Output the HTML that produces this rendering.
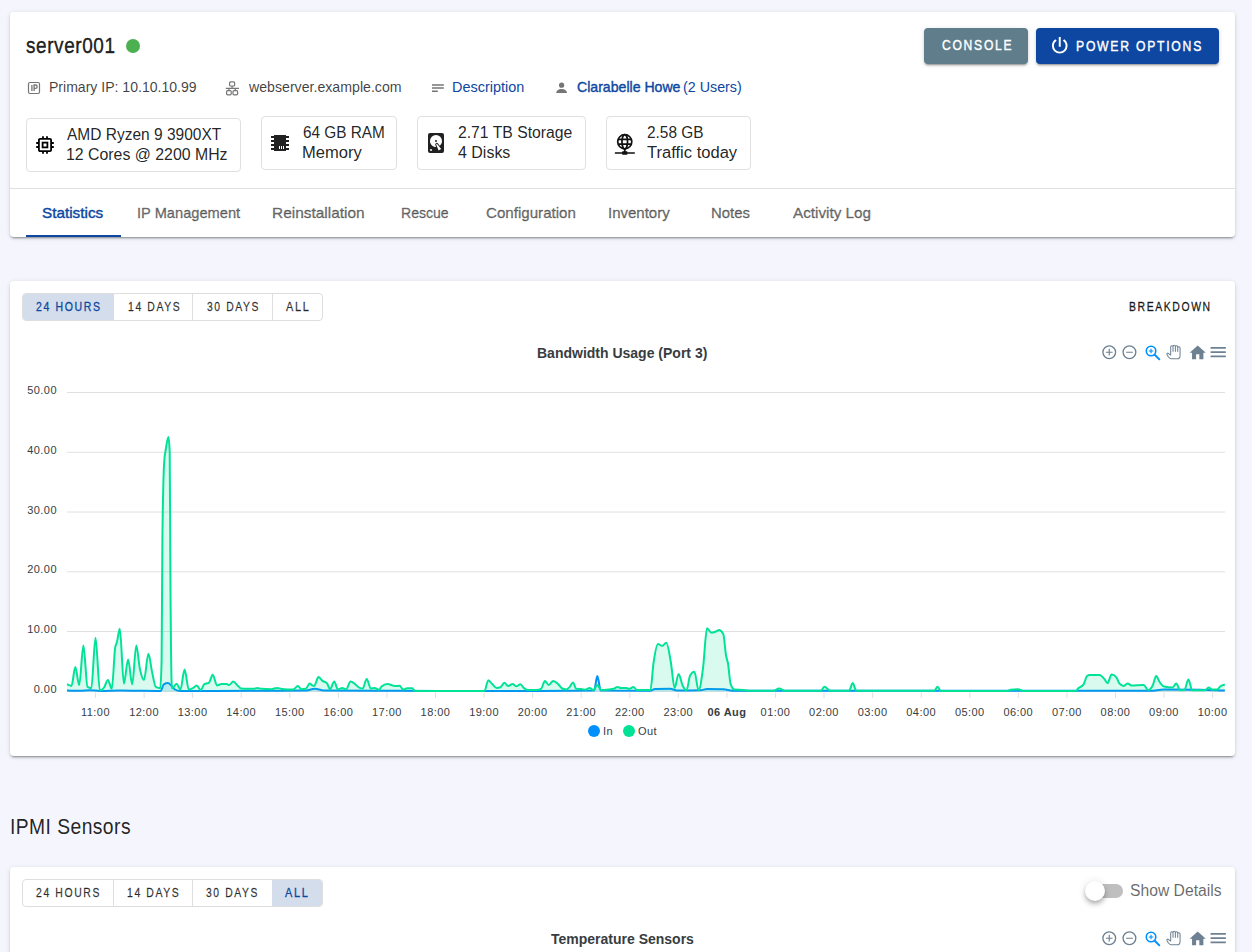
<!DOCTYPE html>
<html><head><meta charset="utf-8">
<style>
html,body{margin:0;padding:0}
body{width:1252px;height:952px;overflow:hidden;background:#f5f6fd;font-family:"Liberation Sans",sans-serif;position:relative;color:rgba(0,0,0,.87)}
.abs{position:absolute;white-space:nowrap}
.card{position:absolute;left:10px;width:1225px;background:#fff;border-radius:4px;box-shadow:0 3px 1px -2px rgba(0,0,0,.2),0 2px 2px 0 rgba(0,0,0,.14),0 1px 5px 0 rgba(0,0,0,.12)}
.t{position:absolute;white-space:nowrap;line-height:1}
.btn{position:absolute;border-radius:4px;color:#fff;font-size:14px;font-weight:normal;-webkit-text-stroke:0.4px currentColor;letter-spacing:2px;box-shadow:0 3px 1px -2px rgba(0,0,0,.2),0 2px 2px 0 rgba(0,0,0,.14),0 1px 5px 0 rgba(0,0,0,.12)}
.spec{position:absolute;border:1px solid #e0e0e0;border-radius:4px;box-sizing:border-box;height:54px}
.spec .t{font-size:16px;color:rgba(0,0,0,.87)}
.tab{position:absolute;font-size:15px;font-weight:normal;-webkit-text-stroke:0.4px currentColor;color:rgba(0,0,0,.54);line-height:1;white-space:nowrap}
.grp{position:absolute;left:12px;top:12px;width:301px;height:28px;border:1px solid #dedede;border-radius:4px;box-sizing:border-box;overflow:hidden}
.grp .b{position:absolute;top:0;height:26px;font-size:13px;font-weight:normal;-webkit-text-stroke:0.3px currentColor;letter-spacing:2px;color:rgba(0,0,0,.75);line-height:1}
.grp .b span{position:absolute;top:6px;white-space:nowrap}
.grp .sep{position:absolute;top:0;width:1px;height:26px;background:#dedede}
.tb svg{position:absolute}
</style></head><body>

<!-- Header card -->
<div class="card" style="top:12px;height:225px">
  <div class="t" id="title" style="left:16.2px;top:23px;font-size:22px;font-weight:normal;-webkit-text-stroke:0.45px currentColor;letter-spacing:0.7px;color:rgba(0,0,0,.87);transform-origin:0 0;transform:scaleX(0.8606)">server001</div>
  <div style="position:absolute;left:116px;top:27px;width:14px;height:14px;border-radius:50%;background:#4caf50"></div>

  <div class="btn" style="left:914px;top:16px;width:104px;height:36px;background:#607d8b"><span class="t" id="console" style="left:17.8px;top:10.2px;transform-origin:0 0;transform:scaleX(0.8648)">CONSOLE</span></div>
  <div class="btn" style="left:1026px;top:16px;width:183px;height:36px;background:#0d47a1">
    <svg style="position:absolute;left:12px;top:6px" width="23.5" height="23.5" viewBox="0 0 24 24"><path fill="#fff" d="M16.56,5.44L15.11,6.89C16.84,7.94 18,9.83 18,12A6,6 0 0,1 12,18A6,6 0 0,1 6,12C6,9.83 7.16,7.94 8.88,6.88L7.44,5.44C5.36,6.88 4,9.28 4,12A8,8 0 0,0 12,20A8,8 0 0,0 20,12C20,9.28 18.64,6.88 16.56,5.44M13,3H11V13H13"/></svg>
    <span class="t" id="power" style="left:39.8px;top:10.7px;transform-origin:0 0;transform:scaleX(0.8713)">POWER OPTIONS</span></div>

  <!-- info row -->
  <svg style="position:absolute;left:17px;top:69px" width="14" height="14" viewBox="0 0 14 14"><rect x="1.5" y="1.5" width="11" height="11" rx="1.5" fill="none" stroke="#757575" stroke-width="1.2"/><path d="M4.9,3.9 V10.1 M7.1,10.1 V4 H8.5 A1.65,1.65 0 0 1 8.5,7.3 H7.1" fill="none" stroke="#757575" stroke-width="1.3"/></svg>
  <div class="t" id="ip" style="left:38.6px;top:66.8px;font-size:15px;color:rgba(0,0,0,.75);transform-origin:0 0;transform:scaleX(0.9366)">Primary IP: 10.10.10.99</div>

  <svg style="position:absolute;left:215px;top:68px" width="16" height="16" viewBox="0 0 16 16"><g fill="none" stroke="#757575" stroke-width="1.2"><rect x="4.6" y="1.8" width="5" height="4.2" rx="1"/><rect x="1.6" y="10.6" width="4.6" height="4.2" rx="1"/><rect x="8" y="10.6" width="4.6" height="4.2" rx="1"/><path d="M7.1,6 V8.4 M0.8,8.4 H14 M3.9,8.4 V10.6 M10.3,8.4 V10.6"/></g></svg>
  <div class="t" id="host" style="left:238.8px;top:66.8px;font-size:15px;color:rgba(0,0,0,.75);transform-origin:0 0;transform:scaleX(0.9432)">webserver.example.com</div>

  <svg style="position:absolute;left:420px;top:68px" width="16" height="16" viewBox="0 0 16 16"><path d="M2,4.9 H13.8 M2,8.1 H13.8 M2,11.3 H7.8" stroke="#757575" stroke-width="1.5" fill="none"/></svg>
  <div class="t" id="desc" style="left:442.2px;top:66.8px;font-size:15px;color:#0d47a1;transform-origin:0 0;transform:scaleX(0.9633)">Description</div>

  <svg style="position:absolute;left:544px;top:68px" width="16" height="16" viewBox="0 0 16 16"><circle cx="7.6" cy="5.2" r="2.6" fill="#757575"/><path d="M2.2,13 C2.4,10.2 5,9 7.6,9 C10.2,9 12.8,10.2 13,13 Z" fill="#757575"/></svg>
  <div class="t" id="user" style="left:566.8px;top:66.8px;font-size:15px;font-weight:normal;-webkit-text-stroke:0.4px currentColor;color:#0d47a1;transform-origin:0 0;transform:scaleX(0.9401)">Clarabelle Howe</div><div class="t" id="user2" style="left:672.8px;top:66.8px;font-size:15px;color:#0d47a1;transform-origin:0 0;transform:scaleX(0.9532)">(2 Users)</div>

  <!-- spec boxes -->
  <div class="spec" style="left:16px;top:106px;width:215px">
    <svg style="position:absolute;left:9px;top:17px" width="18" height="18" viewBox="0 0 18 18"><g fill="none" stroke="#000" stroke-width="1.8"><rect x="2.9" y="2.9" width="12.2" height="12.2" rx="1.2"/><rect x="6.6" y="6.6" width="4.8" height="4.8"/></g><path d="M7,0.2 V2.5 M11,0.2 V2.5 M7,15.5 V17.8 M11,15.5 V17.8 M0.2,7 H2.5 M0.2,11 H2.5 M15.5,7 H17.8 M15.5,11 H17.8" stroke="#000" stroke-width="1.8"/></svg>
    <div class="t" id="s1a" style="left:40.2px;top:8.2px;transform-origin:0 0;transform:scaleX(0.9688)">AMD Ryzen 9 3900XT</div>
    <div class="t" id="s1b" style="left:39.2px;top:28.2px;transform-origin:0 0;transform:scaleX(0.9912)">12 Cores @ 2200 MHz</div>
  </div>
  <div class="spec" style="left:251px;top:104px;width:136px">
    <svg style="position:absolute;left:6px;top:14px" width="24" height="24" viewBox="0 0 24 24"><path fill="#212121" d="M6,4H18V5H21V7H18V9H21V11H18V13H21V15H18V17H21V19H18V20H6V19H3V17H6V15H3V13H6V11H3V9H6V7H3V5H6V4M11,15V18H12V15H11M13,15V18H14V15H13M15,15V18H16V15H15Z"/></svg>
    <div class="t" id="s2a" style="left:40.6px;top:8.0px;transform-origin:0 0;transform:scaleX(0.9595)">64 GB RAM</div>
    <div class="t" id="s2b" style="left:39.6px;top:28.0px;transform-origin:0 0;transform:scaleX(1.0322)">Memory</div>
  </div>
  <div class="spec" style="left:407px;top:104px;width:169px">
    <svg style="position:absolute;left:6px;top:14px" width="24" height="24" viewBox="0 0 24 24"><path fill="#212121" d="M6,2H18A2,2 0 0,1 20,4V20A2,2 0 0,1 18,22H6A2,2 0 0,1 4,20V4A2,2 0 0,1 6,2M12,4A6,6 0 0,0 6,10C6,13.31 8.69,16 12.1,16L11.22,13.77C10.95,13.29 11.11,12.68 11.59,12.4L12.45,11.9C12.93,11.63 13.54,11.79 13.82,12.27L15.74,14.69C17.12,13.59 18,11.9 18,10A6,6 0 0,0 12,4M12,9A1,1 0 0,1 13,10A1,1 0 0,1 12,11A1,1 0 0,1 11,10A1,1 0 0,1 12,9M7,18A1,1 0 0,0 6,19A1,1 0 0,0 7,20A1,1 0 0,0 8,19A1,1 0 0,0 7,18M12.09,13.27L14.58,19.58L17.17,18.08L12.95,12.77L12.09,13.27Z"/></svg>
    <div class="t" id="s3a" style="left:39.8px;top:8.0px;transform-origin:0 0;transform:scaleX(0.9830)">2.71 TB Storage</div>
    <div class="t" id="s3b" style="left:39.8px;top:28.0px;transform-origin:0 0;transform:scaleX(0.9982)">4 Disks</div>
  </div>
  <div class="spec" style="left:596px;top:104px;width:145px">
    <svg style="position:absolute;left:5.5px;top:14.5px" width="24" height="24" viewBox="0 0 24 24"><g fill="none" stroke="#111" stroke-width="1.7"><circle cx="11.75" cy="9.75" r="7.05"/><ellipse cx="11.75" cy="9.75" rx="2.8" ry="7.05"/><path d="M5.2,7.3 H18.3 M5.2,12.2 H18.3 M11.75,16.8 V21 M1.9,21 H21.8"/></g><rect x="9.1" y="19.2" width="5.3" height="3.5" rx="0.6" fill="#111"/></svg>
    <div class="t" id="s4a" style="left:40.0px;top:8.0px;transform-origin:0 0;transform:scaleX(0.9637)">2.58 GB</div>
    <div class="t" id="s4b" style="left:40.0px;top:28.0px;transform-origin:0 0;transform:scaleX(1.0340)">Traffic today</div>
  </div>

  <div style="position:absolute;left:0;top:176px;width:1225px;height:1px;background:#e0e0e0"></div>
  <div class="tab" id="tab1" style="left:32.0px;top:192.8px;color:#0d47a1;transform-origin:0 0;transform:scaleX(1.0199)">Statistics</div>
  <div style="position:absolute;left:16px;top:223px;width:95px;height:2px;background:#0d47a1"></div>
  <div class="tab" id="tab2" style="left:126.6px;top:192.8px;transform-origin:0 0;transform:scaleX(0.9764)">IP Management</div>
  <div class="tab" id="tab3" style="left:262.0px;top:192.8px;transform-origin:0 0;transform:scaleX(1.0284)">Reinstallation</div>
  <div class="tab" id="tab4" style="left:391.2px;top:192.8px;transform-origin:0 0;transform:scaleX(0.9362)">Rescue</div>
  <div class="tab" id="tab5" style="left:476.4px;top:192.8px;transform-origin:0 0;transform:scaleX(1.0076)">Configuration</div>
  <div class="tab" id="tab6" style="left:598.4px;top:192.8px;transform-origin:0 0;transform:scaleX(0.9999)">Inventory</div>
  <div class="tab" id="tab7" style="left:701.4px;top:192.8px;transform-origin:0 0;transform:scaleX(0.9925)">Notes</div>
  <div class="tab" id="tab8" style="left:783.0px;top:192.8px;transform-origin:0 0;transform:scaleX(1.0172)">Activity Log</div>
</div>

<!-- Stats card -->
<div class="card" style="top:281px;height:475px">
  <div class="grp">
    <div class="b" style="left:0;width:91px;background:#d3ddec;color:#0d47a1"><span id="g1" style="left:12.6px;transform-origin:0 0;transform:scaleX(0.8096)">24 HOURS</span></div>
    <div class="b" style="left:91px;width:79px"><span id="g2" style="left:13.6px;transform-origin:0 0;transform:scaleX(0.8010)">14 DAYS</span></div>
    <div class="sep" style="left:169px"></div>
    <div class="b" style="left:170px;width:79px"><span id="g3" style="left:13.6px;transform-origin:0 0;transform:scaleX(0.7981)">30 DAYS</span></div>
    <div class="sep" style="left:249px"></div>
    <div class="b" style="left:250px;width:49px"><span id="g4" style="left:13.0px;transform-origin:0 0;transform:scaleX(0.8375)">ALL</span></div>
  </div>
  <div class="t" id="breakdown" style="left:1118.8px;top:19.0px;font-size:13px;font-weight:normal;-webkit-text-stroke:0.35px currentColor;letter-spacing:2px;color:rgba(0,0,0,.87);transform-origin:0 0;transform:scaleX(0.8016)">BREAKDOWN</div>
</div>

<!-- IPMI heading -->
<div class="t" id="ipmi" style="left:10.0px;top:816.0px;font-size:22px;letter-spacing:0.5px;color:rgba(0,0,0,.87);transform-origin:0 0;transform:scaleX(0.8763)">IPMI Sensors</div>

<!-- IPMI card -->
<div class="card" style="top:867px;height:120px">
  <div class="grp">
    <div class="b" style="left:0;width:90px"><span id="h1" style="left:13.0px;transform-origin:0 0;transform:scaleX(0.8020)">24 HOURS</span></div>
    <div class="sep" style="left:90px"></div>
    <div class="b" style="left:91px;width:78px"><span id="h2" style="left:13.0px;transform-origin:0 0;transform:scaleX(0.8030)">14 DAYS</span></div>
    <div class="sep" style="left:169px"></div>
    <div class="b" style="left:170px;width:79px"><span id="h3" style="left:13.2px;transform-origin:0 0;transform:scaleX(0.7950)">30 DAYS</span></div>
    <div class="b" style="left:249px;width:51px;background:#d3ddec;color:#0d47a1"><span id="h4" style="left:13.4px;transform-origin:0 0;transform:scaleX(0.8375)">ALL</span></div>
  </div>
  <div style="position:absolute;left:1078px;top:17px;width:35px;height:14px;border-radius:7px;background:rgba(0,0,0,.25)"></div>
  <div style="position:absolute;left:1075px;top:14px;width:20px;height:20px;border-radius:50%;background:#fff;box-shadow:0 2px 4px -1px rgba(0,0,0,.2),0 4px 5px 0 rgba(0,0,0,.14),0 1px 10px 0 rgba(0,0,0,.12)"></div>
  <div class="t" id="showdet" style="left:1120.4px;top:15.8px;font-size:16px;color:rgba(0,0,0,.6);transform-origin:0 0;transform:scaleX(0.9809)">Show Details</div>
</div>

<svg class="chart" width="1252" height="952" viewBox="0 0 1252 952" style="position:absolute;left:0;top:0">
<g fill="#373d3f" font-family="Liberation Sans, sans-serif" font-size="11px" letter-spacing="0.45"><text x="57" y="394.00" text-anchor="end">50.00</text><text x="57" y="453.75" text-anchor="end">40.00</text><text x="57" y="513.50" text-anchor="end">30.00</text><text x="57" y="573.25" text-anchor="end">20.00</text><text x="57" y="633.00" text-anchor="end">10.00</text><text x="57" y="692.75" text-anchor="end">0.00</text></g>
<path d="M67,392.50 H1225 M67,452.25 H1225 M67,512.00 H1225 M67,571.75 H1225 M67,631.50 H1225 M67,691.25 H1225" stroke="#e0e0e0" stroke-width="1" fill="none"/>
<path d="M95.5,692.5 V698 M144.1,692.5 V698 M192.6,692.5 V698 M241.2,692.5 V698 M289.8,692.5 V698 M338.4,692.5 V698 M386.9,692.5 V698 M435.5,692.5 V698 M484.1,692.5 V698 M532.6,692.5 V698 M581.2,692.5 V698 M629.8,692.5 V698 M678.3,692.5 V698 M726.9,692.5 V698 M775.5,692.5 V698 M824.0,692.5 V698 M872.6,692.5 V698 M921.2,692.5 V698 M969.8,692.5 V698 M1018.3,692.5 V698 M1066.9,692.5 V698 M1115.5,692.5 V698 M1164.0,692.5 V698 M1212.6,692.5 V698" stroke="#e0e0e0" stroke-width="1" fill="none"/>
<g fill="#373d3f" font-family="Liberation Sans, sans-serif" font-size="11px" letter-spacing="0.45"><text x="95.5" y="716" text-anchor="middle" font-weight="normal">11:00</text><text x="144.1" y="716" text-anchor="middle" font-weight="normal">12:00</text><text x="192.6" y="716" text-anchor="middle" font-weight="normal">13:00</text><text x="241.2" y="716" text-anchor="middle" font-weight="normal">14:00</text><text x="289.8" y="716" text-anchor="middle" font-weight="normal">15:00</text><text x="338.4" y="716" text-anchor="middle" font-weight="normal">16:00</text><text x="386.9" y="716" text-anchor="middle" font-weight="normal">17:00</text><text x="435.5" y="716" text-anchor="middle" font-weight="normal">18:00</text><text x="484.1" y="716" text-anchor="middle" font-weight="normal">19:00</text><text x="532.6" y="716" text-anchor="middle" font-weight="normal">20:00</text><text x="581.2" y="716" text-anchor="middle" font-weight="normal">21:00</text><text x="629.8" y="716" text-anchor="middle" font-weight="normal">22:00</text><text x="678.3" y="716" text-anchor="middle" font-weight="normal">23:00</text><text x="726.9" y="716" text-anchor="middle" font-weight="bold">06 Aug</text><text x="775.5" y="716" text-anchor="middle" font-weight="normal">01:00</text><text x="824.0" y="716" text-anchor="middle" font-weight="normal">02:00</text><text x="872.6" y="716" text-anchor="middle" font-weight="normal">03:00</text><text x="921.2" y="716" text-anchor="middle" font-weight="normal">04:00</text><text x="969.8" y="716" text-anchor="middle" font-weight="normal">05:00</text><text x="1018.3" y="716" text-anchor="middle" font-weight="normal">06:00</text><text x="1066.9" y="716" text-anchor="middle" font-weight="normal">07:00</text><text x="1115.5" y="716" text-anchor="middle" font-weight="normal">08:00</text><text x="1164.0" y="716" text-anchor="middle" font-weight="normal">09:00</text><text x="1212.6" y="716" text-anchor="middle" font-weight="normal">10:00</text></g>
<path d="M67.00,690.60 C71.33,690.67 75.67,690.80 80.00,690.80 C83.33,690.80 86.67,690.20 90.00,690.20 C93.33,690.20 96.67,691.00 100.00,691.00 C106.67,691.00 113.33,690.50 120.00,690.50 C126.67,690.50 133.33,690.72 140.00,690.80 C146.87,690.89 153.73,691.00 160.60,691.00 C161.67,691.00 162.73,684.96 163.80,684.30 C165.20,683.43 166.60,683.00 168.00,683.00 C169.07,683.00 170.13,684.63 171.20,685.60 C172.47,686.75 173.73,688.74 175.00,689.50 C176.67,690.50 178.33,691.00 180.00,691.00 C203.33,691.00 226.67,690.88 250.00,690.80 C268.33,690.74 286.67,690.73 305.00,690.60 C308.27,690.58 311.53,688.80 314.80,688.80 C318.20,688.80 321.60,690.58 325.00,690.60 C350.00,690.73 375.00,690.74 400.00,690.80 C426.67,690.87 453.33,691.00 480.00,691.00 C518.03,691.00 556.07,690.87 594.10,690.60 C595.17,690.59 596.23,676.00 597.30,676.00 C598.47,676.00 599.63,690.59 600.80,690.60 C617.20,690.73 633.60,690.80 650.00,690.80 C651.67,690.80 653.33,689.04 655.00,689.00 C660.00,688.87 665.00,688.80 670.00,688.80 C672.67,688.80 675.33,690.60 678.00,690.60 C685.53,690.60 693.07,690.50 700.60,690.30 C702.73,690.24 704.87,689.00 707.00,689.00 C712.53,689.00 718.07,689.10 723.60,689.30 C726.57,689.41 729.53,690.80 732.50,690.80 C871.67,690.80 1010.83,690.80 1150.00,690.80 C1154.67,690.80 1159.33,689.60 1164.00,689.60 C1176.00,689.60 1188.00,689.67 1200.00,689.80 C1208.27,689.89 1216.53,690.33 1224.80,690.60 L1224.8,691.5 L67.0,691.5 Z" fill="rgba(0,143,251,0.15)"/>
<path d="M67.00,690.60 C71.33,690.67 75.67,690.80 80.00,690.80 C83.33,690.80 86.67,690.20 90.00,690.20 C93.33,690.20 96.67,691.00 100.00,691.00 C106.67,691.00 113.33,690.50 120.00,690.50 C126.67,690.50 133.33,690.72 140.00,690.80 C146.87,690.89 153.73,691.00 160.60,691.00 C161.67,691.00 162.73,684.96 163.80,684.30 C165.20,683.43 166.60,683.00 168.00,683.00 C169.07,683.00 170.13,684.63 171.20,685.60 C172.47,686.75 173.73,688.74 175.00,689.50 C176.67,690.50 178.33,691.00 180.00,691.00 C203.33,691.00 226.67,690.88 250.00,690.80 C268.33,690.74 286.67,690.73 305.00,690.60 C308.27,690.58 311.53,688.80 314.80,688.80 C318.20,688.80 321.60,690.58 325.00,690.60 C350.00,690.73 375.00,690.74 400.00,690.80 C426.67,690.87 453.33,691.00 480.00,691.00 C518.03,691.00 556.07,690.87 594.10,690.60 C595.17,690.59 596.23,676.00 597.30,676.00 C598.47,676.00 599.63,690.59 600.80,690.60 C617.20,690.73 633.60,690.80 650.00,690.80 C651.67,690.80 653.33,689.04 655.00,689.00 C660.00,688.87 665.00,688.80 670.00,688.80 C672.67,688.80 675.33,690.60 678.00,690.60 C685.53,690.60 693.07,690.50 700.60,690.30 C702.73,690.24 704.87,689.00 707.00,689.00 C712.53,689.00 718.07,689.10 723.60,689.30 C726.57,689.41 729.53,690.80 732.50,690.80 C871.67,690.80 1010.83,690.80 1150.00,690.80 C1154.67,690.80 1159.33,689.60 1164.00,689.60 C1176.00,689.60 1188.00,689.67 1200.00,689.80 C1208.27,689.89 1216.53,690.33 1224.80,690.60" fill="none" stroke="#008ffb" stroke-width="2" stroke-linejoin="round" stroke-linecap="butt"/>
<path d="M67.00,684.30 C68.50,684.83 70.00,685.90 71.50,685.90 C72.77,685.90 74.03,667.10 75.30,667.10 C76.60,667.10 77.90,685.00 79.20,685.00 C80.60,685.00 82.00,645.40 83.40,645.40 C84.77,645.40 86.13,685.96 87.50,686.90 C88.77,687.77 90.03,688.20 91.30,688.20 C92.70,688.20 94.10,637.70 95.50,637.70 C96.97,637.70 98.43,690.50 99.90,690.50 C101.30,690.50 102.70,689.45 104.10,687.50 C105.37,685.74 106.63,679.90 107.90,679.90 C109.20,679.90 110.50,688.80 111.80,688.80 C112.93,688.80 114.07,654.10 115.20,647.30 C115.77,643.90 116.33,644.24 116.90,642.20 C117.87,638.72 118.83,628.80 119.80,628.80 C121.17,628.80 122.53,683.70 123.90,683.70 C125.30,683.70 126.70,659.40 128.10,659.40 C129.47,659.40 130.83,684.30 132.20,684.30 C133.57,684.30 134.93,645.40 136.30,645.40 C137.50,645.40 138.70,663.32 139.90,669.00 C141.27,675.47 142.63,679.90 144.00,679.90 C145.47,679.90 146.93,653.70 148.40,653.70 C149.60,653.70 150.80,666.19 152.00,671.60 C153.27,677.32 154.53,686.17 155.80,686.90 C157.30,687.77 158.80,688.20 160.30,688.20 C160.73,688.20 161.17,678.80 161.60,660.00 C161.87,648.43 162.13,563.11 162.40,540.00 C163.00,488.00 163.60,471.33 164.20,462.00 C164.80,452.67 165.40,451.83 166.00,448.00 C166.80,442.89 167.60,437.10 168.40,437.10 C168.83,437.10 169.27,442.07 169.70,452.00 C169.90,456.58 170.10,529.49 170.30,560.00 C170.80,636.29 171.30,682.86 171.80,686.00 C172.03,687.47 172.27,688.20 172.50,688.20 C173.83,688.20 175.17,683.70 176.50,683.70 C177.80,683.70 179.10,689.50 180.40,689.50 C181.80,689.50 183.20,669.60 184.60,669.60 C186.00,669.60 187.40,689.50 188.80,689.50 C190.17,689.50 191.53,688.89 192.90,688.20 C194.17,687.56 195.43,685.60 196.70,685.60 C198.00,685.60 199.30,690.10 200.60,690.10 C201.87,690.10 203.13,684.83 204.40,684.10 C205.90,683.23 207.40,683.67 208.90,682.80 C210.17,682.07 211.43,674.80 212.70,674.80 C214.13,674.80 215.57,685.40 217.00,685.40 C218.50,685.40 220.00,684.10 221.50,684.10 C223.20,684.10 224.90,684.10 226.60,684.10 C227.47,684.10 228.33,685.00 229.20,685.00 C230.57,685.00 231.93,681.50 233.30,681.50 C234.70,681.50 236.10,684.16 237.50,685.40 C238.77,686.52 240.03,688.51 241.30,688.60 C243.20,688.73 245.10,688.80 247.00,688.80 C249.17,688.80 251.33,688.80 253.50,688.80 C254.77,688.80 256.03,687.90 257.30,687.90 C258.57,687.90 259.83,688.70 261.10,688.80 C264.50,689.07 267.90,689.20 271.30,689.20 C273.23,689.20 275.17,687.90 277.10,687.90 C278.60,687.90 280.10,688.72 281.60,688.90 C285.43,689.37 289.27,689.60 293.10,689.60 C294.70,689.60 296.30,686.00 297.90,686.00 C299.07,686.00 300.23,689.20 301.40,689.20 C302.87,689.20 304.33,689.07 305.80,688.80 C307.10,688.56 308.40,683.50 309.70,683.50 C310.53,683.50 311.37,684.98 312.20,685.40 C312.87,685.74 313.53,686.00 314.20,686.00 C315.60,686.00 317.00,677.10 318.40,677.10 C319.77,677.10 321.13,679.90 322.50,680.90 C323.97,681.97 325.43,681.67 326.90,683.20 C327.97,684.32 329.03,689.20 330.10,689.20 C331.47,689.20 332.83,681.50 334.20,681.50 C335.40,681.50 336.60,689.20 337.80,689.20 C339.30,689.20 340.80,687.90 342.30,687.90 C343.57,687.90 344.83,689.20 346.10,689.20 C347.60,689.20 349.10,681.50 350.60,681.50 C352.07,681.50 353.53,683.01 355.00,684.10 C356.30,685.06 357.60,686.75 358.90,687.50 C360.17,688.23 361.43,688.60 362.70,688.60 C364.03,688.60 365.37,679.00 366.70,679.00 C368.07,679.00 369.43,688.60 370.80,688.60 C372.07,688.60 373.33,687.90 374.60,687.90 C376.10,687.90 377.60,689.80 379.10,689.80 C379.93,689.80 380.77,687.32 381.60,686.60 C383.53,684.93 385.47,684.10 387.40,684.10 C389.93,684.10 392.47,686.00 395.00,686.00 C396.50,686.00 398.00,685.80 399.50,685.80 C400.77,685.80 402.03,689.60 403.30,689.60 C404.60,689.60 405.90,688.30 407.20,688.30 C408.90,688.30 410.60,688.30 412.30,688.30 C413.13,688.30 413.97,690.90 414.80,690.90 C438.03,690.90 461.27,690.90 484.50,690.90 C485.77,690.90 487.03,680.30 488.30,680.30 C489.60,680.30 490.90,682.90 492.20,684.10 C493.67,685.45 495.13,687.90 496.60,687.90 C497.90,687.90 499.20,687.70 500.50,687.30 C501.77,686.91 503.03,682.80 504.30,682.80 C505.57,682.80 506.83,686.00 508.10,686.00 C509.60,686.00 511.10,684.10 512.60,684.10 C513.87,684.10 515.13,686.30 516.40,686.30 C517.73,686.30 519.07,684.20 520.40,684.20 C521.53,684.20 522.67,687.13 523.80,688.10 C525.10,689.21 526.40,690.10 527.70,690.10 C530.67,690.10 533.63,690.10 536.60,690.10 C538.10,690.10 539.60,689.67 541.10,688.80 C542.37,688.07 543.63,681.10 544.90,681.10 C546.20,681.10 547.50,685.00 548.80,685.00 C550.27,685.00 551.73,680.90 553.20,680.90 C554.90,680.90 556.60,682.77 558.30,684.30 C559.60,685.47 560.90,687.88 562.20,688.50 C563.47,689.10 564.73,689.40 566.00,689.40 C567.27,689.40 568.53,688.25 569.80,686.90 C570.87,685.76 571.93,682.40 573.00,682.40 C574.07,682.40 575.13,688.72 576.20,688.80 C577.90,688.93 579.60,688.87 581.30,689.00 C582.60,689.10 583.90,689.80 585.20,689.80 C586.67,689.80 588.13,688.10 589.60,688.10 C590.90,688.10 592.20,690.10 593.50,690.10 C594.77,690.10 596.03,685.00 597.30,685.00 C598.60,685.00 599.90,690.10 601.20,690.10 C603.97,690.10 606.73,689.73 609.50,689.40 C610.97,689.23 612.43,689.20 613.90,688.80 C615.07,688.48 616.23,686.90 617.40,686.90 C618.60,686.90 619.80,688.10 621.00,688.10 C622.70,688.10 624.40,688.10 626.10,688.10 C627.27,688.10 628.43,688.80 629.60,688.80 C630.90,688.80 632.20,686.90 633.50,686.90 C634.63,686.90 635.77,690.10 636.90,690.10 C641.40,690.10 645.90,690.10 650.40,690.10 C651.43,690.10 652.47,670.30 653.50,663.20 C655.00,652.90 656.50,644.10 658.00,644.10 C659.37,644.10 660.73,646.00 662.10,646.00 C663.50,646.00 664.90,642.80 666.30,642.80 C667.80,642.80 669.30,653.48 670.80,662.00 C672.07,669.19 673.33,688.10 674.60,688.10 C675.93,688.10 677.27,673.90 678.60,673.90 C679.97,673.90 681.33,683.05 682.70,685.80 C683.97,688.35 685.23,690.30 686.50,690.30 C687.70,690.30 688.90,677.72 690.10,675.60 C691.53,673.07 692.97,671.80 694.40,671.80 C695.80,671.80 697.20,690.30 698.60,690.30 C700.10,690.30 701.60,678.90 703.10,667.30 C704.40,657.25 705.70,628.30 707.00,628.30 C708.47,628.30 709.93,632.80 711.40,632.80 C712.90,632.80 714.40,632.09 715.90,631.50 C716.97,631.08 718.03,630.00 719.10,630.00 C720.50,630.00 721.90,631.37 723.30,634.10 C724.23,635.92 725.17,650.62 726.10,655.80 C726.73,659.31 727.37,659.92 728.00,663.50 C728.87,668.40 729.73,681.30 730.60,683.90 C731.87,687.70 733.13,689.48 734.40,689.60 C737.17,689.87 739.93,689.75 742.70,690.00 C744.63,690.18 746.57,690.70 748.50,690.70 C756.80,690.70 765.10,690.70 773.40,690.70 C775.33,690.70 777.27,688.40 779.20,688.40 C781.10,688.40 783.00,690.70 784.90,690.70 C796.83,690.70 808.77,690.70 820.70,690.70 C821.97,690.70 823.23,686.70 824.50,686.70 C826.43,686.70 828.37,690.70 830.30,690.70 C836.60,690.70 842.90,690.70 849.20,690.70 C850.37,690.70 851.53,683.00 852.70,683.00 C853.87,683.00 855.03,690.70 856.20,690.70 C882.20,690.70 908.20,690.70 934.20,690.70 C935.33,690.70 936.47,686.80 937.60,686.80 C938.70,686.80 939.80,690.89 940.90,690.90 C963.07,691.03 985.23,691.10 1007.40,691.10 C1008.47,691.10 1009.53,689.97 1010.60,689.80 C1013.13,689.40 1015.67,689.20 1018.20,689.20 C1019.90,689.20 1021.60,691.10 1023.30,691.10 C1040.77,691.10 1058.23,691.10 1075.70,691.10 C1076.57,691.10 1077.43,689.12 1078.30,688.30 C1080.00,686.68 1081.70,687.10 1083.40,684.70 C1084.67,682.91 1085.93,676.48 1087.20,675.80 C1088.07,675.33 1088.93,675.10 1089.80,675.10 C1093.00,675.10 1096.20,675.10 1099.40,675.10 C1101.03,675.10 1102.67,677.07 1104.30,678.90 C1105.37,680.09 1106.43,683.20 1107.50,683.20 C1108.87,683.20 1110.23,674.60 1111.60,674.60 C1113.20,674.60 1114.80,675.50 1116.40,677.30 C1117.37,678.39 1118.33,682.28 1119.30,683.40 C1120.73,685.07 1122.17,685.90 1123.60,685.90 C1124.93,685.90 1126.27,683.40 1127.60,683.40 C1128.87,683.40 1130.13,685.40 1131.40,685.40 C1135.50,685.40 1139.60,684.90 1143.70,684.90 C1145.17,684.90 1146.63,690.00 1148.10,690.00 C1149.60,690.00 1151.10,688.60 1152.60,685.80 C1153.80,683.56 1155.00,676.00 1156.20,676.00 C1157.33,676.00 1158.47,680.37 1159.60,682.00 C1161.10,684.15 1162.60,686.14 1164.10,686.50 C1166.87,687.17 1169.63,687.50 1172.40,687.50 C1173.70,687.50 1175.00,683.60 1176.30,683.60 C1177.57,683.60 1178.83,690.30 1180.10,690.30 C1181.60,690.30 1183.10,690.07 1184.60,689.60 C1185.87,689.21 1187.13,679.40 1188.40,679.40 C1189.67,679.40 1190.93,690.30 1192.20,690.30 C1196.47,690.30 1200.73,690.30 1205.00,690.30 C1206.20,690.30 1207.40,687.50 1208.60,687.50 C1209.73,687.50 1210.87,689.60 1212.00,689.60 C1213.73,689.60 1215.47,689.60 1217.20,689.60 C1218.27,689.60 1219.33,687.02 1220.40,686.20 C1221.87,685.07 1223.33,685.07 1224.80,684.50 L1224.8,691.5 L67.0,691.5 Z" fill="rgba(0,227,150,0.15)"/>
<path d="M67.00,684.30 C68.50,684.83 70.00,685.90 71.50,685.90 C72.77,685.90 74.03,667.10 75.30,667.10 C76.60,667.10 77.90,685.00 79.20,685.00 C80.60,685.00 82.00,645.40 83.40,645.40 C84.77,645.40 86.13,685.96 87.50,686.90 C88.77,687.77 90.03,688.20 91.30,688.20 C92.70,688.20 94.10,637.70 95.50,637.70 C96.97,637.70 98.43,690.50 99.90,690.50 C101.30,690.50 102.70,689.45 104.10,687.50 C105.37,685.74 106.63,679.90 107.90,679.90 C109.20,679.90 110.50,688.80 111.80,688.80 C112.93,688.80 114.07,654.10 115.20,647.30 C115.77,643.90 116.33,644.24 116.90,642.20 C117.87,638.72 118.83,628.80 119.80,628.80 C121.17,628.80 122.53,683.70 123.90,683.70 C125.30,683.70 126.70,659.40 128.10,659.40 C129.47,659.40 130.83,684.30 132.20,684.30 C133.57,684.30 134.93,645.40 136.30,645.40 C137.50,645.40 138.70,663.32 139.90,669.00 C141.27,675.47 142.63,679.90 144.00,679.90 C145.47,679.90 146.93,653.70 148.40,653.70 C149.60,653.70 150.80,666.19 152.00,671.60 C153.27,677.32 154.53,686.17 155.80,686.90 C157.30,687.77 158.80,688.20 160.30,688.20 C160.73,688.20 161.17,678.80 161.60,660.00 C161.87,648.43 162.13,563.11 162.40,540.00 C163.00,488.00 163.60,471.33 164.20,462.00 C164.80,452.67 165.40,451.83 166.00,448.00 C166.80,442.89 167.60,437.10 168.40,437.10 C168.83,437.10 169.27,442.07 169.70,452.00 C169.90,456.58 170.10,529.49 170.30,560.00 C170.80,636.29 171.30,682.86 171.80,686.00 C172.03,687.47 172.27,688.20 172.50,688.20 C173.83,688.20 175.17,683.70 176.50,683.70 C177.80,683.70 179.10,689.50 180.40,689.50 C181.80,689.50 183.20,669.60 184.60,669.60 C186.00,669.60 187.40,689.50 188.80,689.50 C190.17,689.50 191.53,688.89 192.90,688.20 C194.17,687.56 195.43,685.60 196.70,685.60 C198.00,685.60 199.30,690.10 200.60,690.10 C201.87,690.10 203.13,684.83 204.40,684.10 C205.90,683.23 207.40,683.67 208.90,682.80 C210.17,682.07 211.43,674.80 212.70,674.80 C214.13,674.80 215.57,685.40 217.00,685.40 C218.50,685.40 220.00,684.10 221.50,684.10 C223.20,684.10 224.90,684.10 226.60,684.10 C227.47,684.10 228.33,685.00 229.20,685.00 C230.57,685.00 231.93,681.50 233.30,681.50 C234.70,681.50 236.10,684.16 237.50,685.40 C238.77,686.52 240.03,688.51 241.30,688.60 C243.20,688.73 245.10,688.80 247.00,688.80 C249.17,688.80 251.33,688.80 253.50,688.80 C254.77,688.80 256.03,687.90 257.30,687.90 C258.57,687.90 259.83,688.70 261.10,688.80 C264.50,689.07 267.90,689.20 271.30,689.20 C273.23,689.20 275.17,687.90 277.10,687.90 C278.60,687.90 280.10,688.72 281.60,688.90 C285.43,689.37 289.27,689.60 293.10,689.60 C294.70,689.60 296.30,686.00 297.90,686.00 C299.07,686.00 300.23,689.20 301.40,689.20 C302.87,689.20 304.33,689.07 305.80,688.80 C307.10,688.56 308.40,683.50 309.70,683.50 C310.53,683.50 311.37,684.98 312.20,685.40 C312.87,685.74 313.53,686.00 314.20,686.00 C315.60,686.00 317.00,677.10 318.40,677.10 C319.77,677.10 321.13,679.90 322.50,680.90 C323.97,681.97 325.43,681.67 326.90,683.20 C327.97,684.32 329.03,689.20 330.10,689.20 C331.47,689.20 332.83,681.50 334.20,681.50 C335.40,681.50 336.60,689.20 337.80,689.20 C339.30,689.20 340.80,687.90 342.30,687.90 C343.57,687.90 344.83,689.20 346.10,689.20 C347.60,689.20 349.10,681.50 350.60,681.50 C352.07,681.50 353.53,683.01 355.00,684.10 C356.30,685.06 357.60,686.75 358.90,687.50 C360.17,688.23 361.43,688.60 362.70,688.60 C364.03,688.60 365.37,679.00 366.70,679.00 C368.07,679.00 369.43,688.60 370.80,688.60 C372.07,688.60 373.33,687.90 374.60,687.90 C376.10,687.90 377.60,689.80 379.10,689.80 C379.93,689.80 380.77,687.32 381.60,686.60 C383.53,684.93 385.47,684.10 387.40,684.10 C389.93,684.10 392.47,686.00 395.00,686.00 C396.50,686.00 398.00,685.80 399.50,685.80 C400.77,685.80 402.03,689.60 403.30,689.60 C404.60,689.60 405.90,688.30 407.20,688.30 C408.90,688.30 410.60,688.30 412.30,688.30 C413.13,688.30 413.97,690.90 414.80,690.90 C438.03,690.90 461.27,690.90 484.50,690.90 C485.77,690.90 487.03,680.30 488.30,680.30 C489.60,680.30 490.90,682.90 492.20,684.10 C493.67,685.45 495.13,687.90 496.60,687.90 C497.90,687.90 499.20,687.70 500.50,687.30 C501.77,686.91 503.03,682.80 504.30,682.80 C505.57,682.80 506.83,686.00 508.10,686.00 C509.60,686.00 511.10,684.10 512.60,684.10 C513.87,684.10 515.13,686.30 516.40,686.30 C517.73,686.30 519.07,684.20 520.40,684.20 C521.53,684.20 522.67,687.13 523.80,688.10 C525.10,689.21 526.40,690.10 527.70,690.10 C530.67,690.10 533.63,690.10 536.60,690.10 C538.10,690.10 539.60,689.67 541.10,688.80 C542.37,688.07 543.63,681.10 544.90,681.10 C546.20,681.10 547.50,685.00 548.80,685.00 C550.27,685.00 551.73,680.90 553.20,680.90 C554.90,680.90 556.60,682.77 558.30,684.30 C559.60,685.47 560.90,687.88 562.20,688.50 C563.47,689.10 564.73,689.40 566.00,689.40 C567.27,689.40 568.53,688.25 569.80,686.90 C570.87,685.76 571.93,682.40 573.00,682.40 C574.07,682.40 575.13,688.72 576.20,688.80 C577.90,688.93 579.60,688.87 581.30,689.00 C582.60,689.10 583.90,689.80 585.20,689.80 C586.67,689.80 588.13,688.10 589.60,688.10 C590.90,688.10 592.20,690.10 593.50,690.10 C594.77,690.10 596.03,685.00 597.30,685.00 C598.60,685.00 599.90,690.10 601.20,690.10 C603.97,690.10 606.73,689.73 609.50,689.40 C610.97,689.23 612.43,689.20 613.90,688.80 C615.07,688.48 616.23,686.90 617.40,686.90 C618.60,686.90 619.80,688.10 621.00,688.10 C622.70,688.10 624.40,688.10 626.10,688.10 C627.27,688.10 628.43,688.80 629.60,688.80 C630.90,688.80 632.20,686.90 633.50,686.90 C634.63,686.90 635.77,690.10 636.90,690.10 C641.40,690.10 645.90,690.10 650.40,690.10 C651.43,690.10 652.47,670.30 653.50,663.20 C655.00,652.90 656.50,644.10 658.00,644.10 C659.37,644.10 660.73,646.00 662.10,646.00 C663.50,646.00 664.90,642.80 666.30,642.80 C667.80,642.80 669.30,653.48 670.80,662.00 C672.07,669.19 673.33,688.10 674.60,688.10 C675.93,688.10 677.27,673.90 678.60,673.90 C679.97,673.90 681.33,683.05 682.70,685.80 C683.97,688.35 685.23,690.30 686.50,690.30 C687.70,690.30 688.90,677.72 690.10,675.60 C691.53,673.07 692.97,671.80 694.40,671.80 C695.80,671.80 697.20,690.30 698.60,690.30 C700.10,690.30 701.60,678.90 703.10,667.30 C704.40,657.25 705.70,628.30 707.00,628.30 C708.47,628.30 709.93,632.80 711.40,632.80 C712.90,632.80 714.40,632.09 715.90,631.50 C716.97,631.08 718.03,630.00 719.10,630.00 C720.50,630.00 721.90,631.37 723.30,634.10 C724.23,635.92 725.17,650.62 726.10,655.80 C726.73,659.31 727.37,659.92 728.00,663.50 C728.87,668.40 729.73,681.30 730.60,683.90 C731.87,687.70 733.13,689.48 734.40,689.60 C737.17,689.87 739.93,689.75 742.70,690.00 C744.63,690.18 746.57,690.70 748.50,690.70 C756.80,690.70 765.10,690.70 773.40,690.70 C775.33,690.70 777.27,688.40 779.20,688.40 C781.10,688.40 783.00,690.70 784.90,690.70 C796.83,690.70 808.77,690.70 820.70,690.70 C821.97,690.70 823.23,686.70 824.50,686.70 C826.43,686.70 828.37,690.70 830.30,690.70 C836.60,690.70 842.90,690.70 849.20,690.70 C850.37,690.70 851.53,683.00 852.70,683.00 C853.87,683.00 855.03,690.70 856.20,690.70 C882.20,690.70 908.20,690.70 934.20,690.70 C935.33,690.70 936.47,686.80 937.60,686.80 C938.70,686.80 939.80,690.89 940.90,690.90 C963.07,691.03 985.23,691.10 1007.40,691.10 C1008.47,691.10 1009.53,689.97 1010.60,689.80 C1013.13,689.40 1015.67,689.20 1018.20,689.20 C1019.90,689.20 1021.60,691.10 1023.30,691.10 C1040.77,691.10 1058.23,691.10 1075.70,691.10 C1076.57,691.10 1077.43,689.12 1078.30,688.30 C1080.00,686.68 1081.70,687.10 1083.40,684.70 C1084.67,682.91 1085.93,676.48 1087.20,675.80 C1088.07,675.33 1088.93,675.10 1089.80,675.10 C1093.00,675.10 1096.20,675.10 1099.40,675.10 C1101.03,675.10 1102.67,677.07 1104.30,678.90 C1105.37,680.09 1106.43,683.20 1107.50,683.20 C1108.87,683.20 1110.23,674.60 1111.60,674.60 C1113.20,674.60 1114.80,675.50 1116.40,677.30 C1117.37,678.39 1118.33,682.28 1119.30,683.40 C1120.73,685.07 1122.17,685.90 1123.60,685.90 C1124.93,685.90 1126.27,683.40 1127.60,683.40 C1128.87,683.40 1130.13,685.40 1131.40,685.40 C1135.50,685.40 1139.60,684.90 1143.70,684.90 C1145.17,684.90 1146.63,690.00 1148.10,690.00 C1149.60,690.00 1151.10,688.60 1152.60,685.80 C1153.80,683.56 1155.00,676.00 1156.20,676.00 C1157.33,676.00 1158.47,680.37 1159.60,682.00 C1161.10,684.15 1162.60,686.14 1164.10,686.50 C1166.87,687.17 1169.63,687.50 1172.40,687.50 C1173.70,687.50 1175.00,683.60 1176.30,683.60 C1177.57,683.60 1178.83,690.30 1180.10,690.30 C1181.60,690.30 1183.10,690.07 1184.60,689.60 C1185.87,689.21 1187.13,679.40 1188.40,679.40 C1189.67,679.40 1190.93,690.30 1192.20,690.30 C1196.47,690.30 1200.73,690.30 1205.00,690.30 C1206.20,690.30 1207.40,687.50 1208.60,687.50 C1209.73,687.50 1210.87,689.60 1212.00,689.60 C1213.73,689.60 1215.47,689.60 1217.20,689.60 C1218.27,689.60 1219.33,687.02 1220.40,686.20 C1221.87,685.07 1223.33,685.07 1224.80,684.50" fill="none" stroke="#00e396" stroke-width="2" stroke-linejoin="round" stroke-linecap="butt"/>
</svg>

<!-- chart titles / toolbars -->
<div class="t" id="ct1" style="left:537px;top:346px;font-size:14px;font-weight:bold;color:#373d3f">Bandwidth Usage (Port 3)</div>
<div class="t" id="ct2" style="left:551px;top:931.6px;font-size:14px;font-weight:bold;color:#373d3f">Temperature Sensors</div>
<div class="t" id="in" style="left:603px;top:726px;font-size:11px;letter-spacing:0.45px;color:#373d3f">In</div>
<div class="t" id="out" style="left:638px;top:726px;font-size:11px;letter-spacing:0.45px;color:#373d3f">Out</div>
<div style="position:absolute;left:588px;top:725px;width:12px;height:12px;border-radius:50%;background:#008ffb"></div>
<div style="position:absolute;left:623px;top:725px;width:12px;height:12px;border-radius:50%;background:#00e396"></div>

<svg style="position:absolute;left:1095px;top:338px" width="48" height="28" viewBox="1095 338 48 28"><g fill="none" stroke="#6e8192" stroke-width="1.35"><circle cx="1109.25" cy="352.2" r="6.35"/><circle cx="1129.45" cy="352.2" r="6.35"/></g><g fill="none" stroke="#6e8192" stroke-width="1.15"><path d="M1105.9,352.2 H1112.6 M1109.25,348.85 V355.55 M1126.1,352.2 H1132.9"/></g></svg>
<svg style="position:absolute;left:1143.10px;top:343.10px" width="20.30" height="20.30" viewBox="0 0 24 24"><circle cx="9.5" cy="9.5" r="5.6" fill="none" stroke="#008ffb" stroke-width="1.9"/><path d="M13.6,13.6 L19.9,19.9" stroke="#008ffb" stroke-width="2.3"/><path fill="none" stroke="#008ffb" stroke-width="1.3" d="M6.8,9.5 H12.2 M9.5,6.8 V12.2"/></svg>
<svg style="position:absolute;left:1165.60px;top:344.00px" width="16.08" height="16.08" viewBox="0 0 24 24"><path fill="#fff" stroke="#6e8192" stroke-width="1.55" stroke-linejoin="round" d="M7.5,22 C5.5,22 4.2,20.5 3.2,18.8 L1.3,15.2 C0.9,14.2 2.2,13.2 3.3,13.9 L7,16.5 V4.5 A1.75,1.75 0 0 1 10.5,4.5 V11 V3.75 A1.75,1.75 0 0 1 14,3.75 V11 V4.25 A1.75,1.75 0 0 1 17.5,4.25 V11 V6 A1.75,1.75 0 0 1 21,6 V17 C21,19.8 19.5,22 16.5,22 Z"/></svg>
<svg style="position:absolute;left:1187.98px;top:342.57px" width="19.44" height="19.44" viewBox="0 0 24 24"><path fill="#6e8192" d="M10 20v-6h4v6h5v-8h3L12 3 2 12h3v8z"/></svg>
<svg style="position:absolute;left:1207.58px;top:342.40px" width="20.40" height="20.40" viewBox="0 0 24 24"><path fill="#6e8192" d="M3 18h18v-2H3v2zm0-5h18v-2H3v2zm0-7v2h18V6H3z"/></svg>
<svg style="position:absolute;left:1095px;top:924px" width="48" height="28" viewBox="1095 338 48 28"><g fill="none" stroke="#6e8192" stroke-width="1.35"><circle cx="1109.25" cy="352.2" r="6.35"/><circle cx="1129.45" cy="352.2" r="6.35"/></g><g fill="none" stroke="#6e8192" stroke-width="1.15"><path d="M1105.9,352.2 H1112.6 M1109.25,348.85 V355.55 M1126.1,352.2 H1132.9"/></g></svg>
<svg style="position:absolute;left:1143.10px;top:929.10px" width="20.30" height="20.30" viewBox="0 0 24 24"><circle cx="9.5" cy="9.5" r="5.6" fill="none" stroke="#008ffb" stroke-width="1.9"/><path d="M13.6,13.6 L19.9,19.9" stroke="#008ffb" stroke-width="2.3"/><path fill="none" stroke="#008ffb" stroke-width="1.3" d="M6.8,9.5 H12.2 M9.5,6.8 V12.2"/></svg>
<svg style="position:absolute;left:1165.60px;top:930.00px" width="16.08" height="16.08" viewBox="0 0 24 24"><path fill="#fff" stroke="#6e8192" stroke-width="1.55" stroke-linejoin="round" d="M7.5,22 C5.5,22 4.2,20.5 3.2,18.8 L1.3,15.2 C0.9,14.2 2.2,13.2 3.3,13.9 L7,16.5 V4.5 A1.75,1.75 0 0 1 10.5,4.5 V11 V3.75 A1.75,1.75 0 0 1 14,3.75 V11 V4.25 A1.75,1.75 0 0 1 17.5,4.25 V11 V6 A1.75,1.75 0 0 1 21,6 V17 C21,19.8 19.5,22 16.5,22 Z"/></svg>
<svg style="position:absolute;left:1187.98px;top:928.57px" width="19.44" height="19.44" viewBox="0 0 24 24"><path fill="#6e8192" d="M10 20v-6h4v6h5v-8h3L12 3 2 12h3v8z"/></svg>
<svg style="position:absolute;left:1207.58px;top:928.40px" width="20.40" height="20.40" viewBox="0 0 24 24"><path fill="#6e8192" d="M3 18h18v-2H3v2zm0-5h18v-2H3v2zm0-7v2h18V6H3z"/></svg>
</body></html>
